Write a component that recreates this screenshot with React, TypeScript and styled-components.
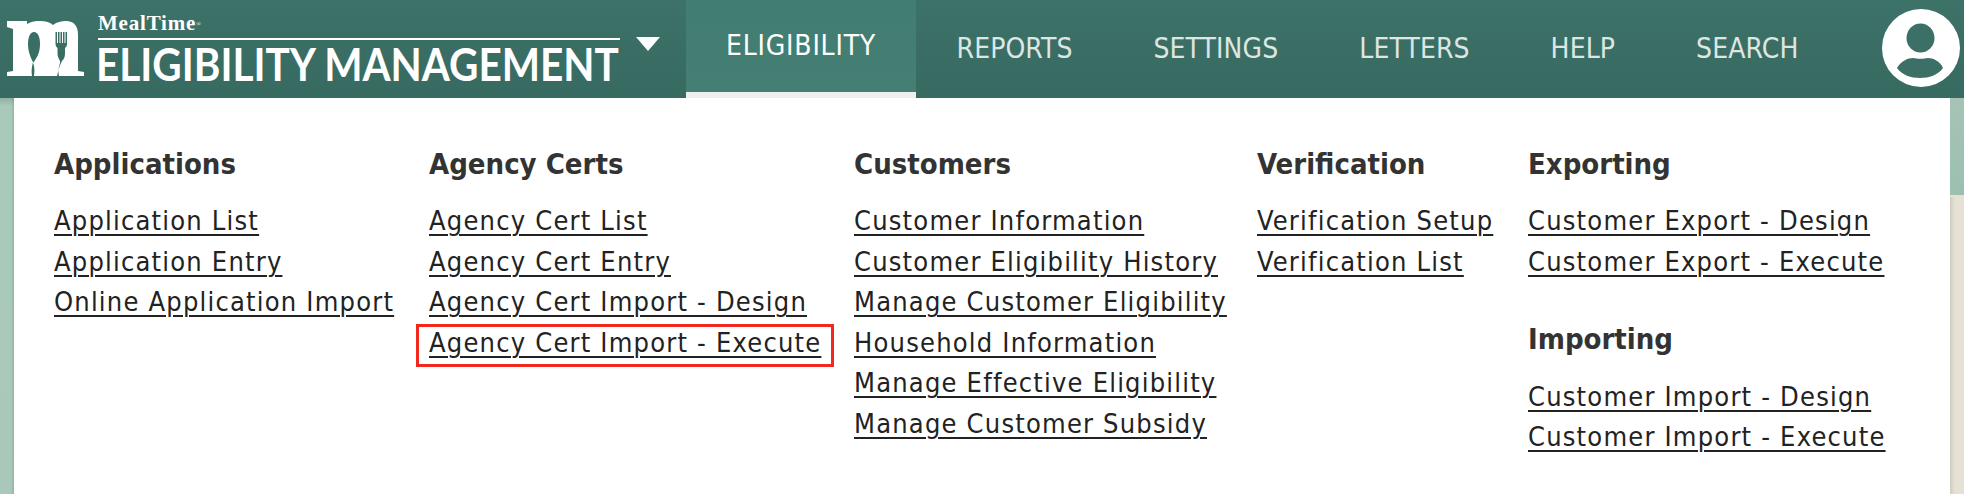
import React from 'react';
import styled, { createGlobalStyle } from 'styled-components';

const GlobalStyle = createGlobalStyle`
  html, body {
    margin: 0;
    padding: 0;
  }
  body {
    font-family: 'DejaVu Sans Condensed', 'DejaVu Sans', sans-serif;
    background: #fff;
  }
`;

const TABS = ['ELIGIBILITY', 'REPORTS', 'SETTINGS', 'LETTERS', 'HELP', 'SEARCH'];

type MenuGroup = { title: string; links: { label: string; marked?: boolean }[] };

const COLUMNS: { width: number; groups: MenuGroup[] }[] = [
  {
    width: 375,
    groups: [
      {
        title: 'Applications',
        links: [
          { label: 'Application List' },
          { label: 'Application Entry' },
          { label: 'Online Application Import' },
        ],
      },
    ],
  },
  {
    width: 425,
    groups: [
      {
        title: 'Agency Certs',
        links: [
          { label: 'Agency Cert List' },
          { label: 'Agency Cert Entry' },
          { label: 'Agency Cert Import - Design' },
          { label: 'Agency Cert Import - Execute', marked: true },
        ],
      },
    ],
  },
  {
    width: 403,
    groups: [
      {
        title: 'Customers',
        links: [
          { label: 'Customer Information' },
          { label: 'Customer Eligibility History' },
          { label: 'Manage Customer Eligibility' },
          { label: 'Household Information' },
          { label: 'Manage Effective Eligibility' },
          { label: 'Manage Customer Subsidy' },
        ],
      },
    ],
  },
  {
    width: 271,
    groups: [
      {
        title: 'Verification',
        links: [{ label: 'Verification Setup' }, { label: 'Verification List' }],
      },
    ],
  },
  {
    width: 380,
    groups: [
      {
        title: 'Exporting',
        links: [{ label: 'Customer Export - Design' }, { label: 'Customer Export - Execute' }],
      },
      {
        title: 'Importing',
        links: [{ label: 'Customer Import - Design' }, { label: 'Customer Import - Execute' }],
      },
    ],
  },
];

const MealTimeMark = () => (
  <LogoSvg viewBox="0 0 77 55">
    <path
      fillRule="evenodd"
      fill="#fff"
      d="M0 0H20V3C24 .5 29 0 33 0C39 0 43 1.500 46 4C50 1 54 0 59 0C67 0 71 5 71 14V50L77 51V55H50L52 47C53 44 54 42 55 40C57 38 58 36 58 32V27C59 26 60 25 60 23V11H58.500V22H57.500V11H56V22H55V11H53.500V22H52.500V11H51V22H50V11H48.500V23C48.500 25 49.500 26 50.500 27V32C50.500 36 52 38 53 40C54 42 50 47 52 55H27C28 48 27 44 26 42C29 38 33 33 33 23C33 16 31 11 27 11C23 11 21 16 21 23C21 31 24 37 26 41C25 45 24 50 25 55H0V51L6 50V8L0 6Z"
    />
  </LogoSvg>
);

const UserIcon = () => (
  <AvatarSvg viewBox="0 0 78 78">
    <circle cx="39" cy="39" r="39" fill="#fff" />
    <ellipse cx="38.500" cy="29" rx="14" ry="14.500" fill="#3c6f65" />
    <path
      fill="#3c6f65"
      d="M15 59C19 52 26 49 31 49C35 50 42 50 46 49C51 49 58 52 61 59C56 66 47 69 38 69C29 69 20 66 15 59Z"
    />
  </AvatarSvg>
);

const App = () => {
  return (
    <>
      <GlobalStyle />
      <Page>
        <Header>
          <Brand>
            <MealTimeMark />
            <BrandText>
              <BrandName>
                MealTime<BrandReg>®</BrandReg>
              </BrandName>
              <ProductName>ELIGIBILITY MANAGEMENT</ProductName>
            </BrandText>
            <Caret />
          </Brand>
          <Tabs>
            {TABS.map((tab, i) => (
              <Tab key={tab} $active={i === 0}>
                {tab}
              </Tab>
            ))}
          </Tabs>
          <UserIcon />
        </Header>
        <Panel>
          {COLUMNS.map((column) => (
            <Column key={column.groups[0].title} $width={column.width}>
              {column.groups.map((group) => (
                <Group key={group.title}>
                  <GroupTitle>{group.title}</GroupTitle>
                  <LinkList>
                    {group.links.map((link) => (
                      <MenuLink key={link.label} href="#" $marked={link.marked}>
                        {link.label}
                      </MenuLink>
                    ))}
                  </LinkList>
                </Group>
              ))}
            </Column>
          ))}
        </Panel>
      </Page>
    </>
  );
};

export default App;

const Page = styled.div`
  width: 1964px;
  height: 494px;
  overflow: hidden;
  background:
    linear-gradient(to right, transparent 11px, rgba(60, 80, 70, 0.18) 14px) 0 98px / 14px 396px no-repeat,
    linear-gradient(#8fb0a2, #a9cabb 8px, #a9c8b9 100%) 0 98px / 14px 396px no-repeat,
    linear-gradient(to right, rgba(60, 60, 40, 0.12), transparent 5px) 1950px 197px / 14px 297px no-repeat,
    linear-gradient(#a5c4b6, #9cc0b0 97px, #e5e2d5 97px) 1950px 98px / 14px 396px no-repeat,
    #fff;
`;

const Header = styled.header`
  display: flex;
  align-items: stretch;
  height: 98px;
  background: linear-gradient(#3d7268, #376a60);
`;

const Brand = styled.div`
  display: flex;
  align-items: flex-start;
  width: 686px;
  padding: 21px 0 0 7px;
  box-sizing: border-box;
`;

const LogoSvg = styled.svg`
  width: 77px;
  height: 55px;
  flex-shrink: 0;
`;

const BrandText = styled.div`
  display: flex;
  flex-direction: column;
  margin: -8px 0 0 14px;
  width: 522px;
`;

const BrandName = styled.div`
  height: 25px;
  border-bottom: 2px solid #fff;
  color: #fff;
  font-family: 'Liberation Serif', serif;
  font-size: 21px;
  font-weight: bold;
  letter-spacing: 0.8px;
  line-height: 20px;
`;

const BrandReg = styled.span`
  font-size: 6px;
  font-weight: normal;
  vertical-align: 4px;
`;

const ProductName = styled.div`
  margin: 1px 0 0 -2px;
  color: #fff;
  font-family: 'Lato', sans-serif;
  font-size: 45px;
  font-weight: 700;
  line-height: 46px;
  white-space: nowrap;
  transform: scaleX(0.9);
  transform-origin: left center;
`;

const Caret = styled.div`
  width: 0;
  height: 0;
  margin: 16px 0 0 16px;
  border-left: 12px solid transparent;
  border-right: 12px solid transparent;
  border-top: 14px solid #fff;
`;

const Tabs = styled.nav`
  display: flex;
  flex: 1;
`;

const Tab = styled.div<{ $active?: boolean }>`
  padding: ${(p) => (p.$active ? '29px 40px 0' : '32px 40.500px 0')};
  font-size: 28px;
  line-height: 34px;
  letter-spacing: ${(p) => (p.$active ? '0.8px' : '0.1px')};
  box-sizing: border-box;
  color: ${(p) => (p.$active ? '#fff' : '#dde6e3')};
  background: ${(p) => (p.$active ? 'linear-gradient(#427d71, #457f73)' : 'transparent')};
  border-bottom: ${(p) => (p.$active ? '6px solid #eeeeee' : '0')};
`;

const AvatarSvg = styled.svg`
  width: 78px;
  height: 78px;
  margin: 9px 4px 0 0;
  flex-shrink: 0;
`;

const Panel = styled.main`
  display: flex;
  height: 396px;
  margin: 0 14px;
  padding: 46px 0 0 40px;
  box-sizing: border-box;
  background: #fff;
`;

const Column = styled.div<{ $width: number }>`
  display: flex;
  flex-direction: column;
  gap: 37px;
  flex: 0 0 ${(p) => p.$width}px;
`;

const Group = styled.section`
  display: flex;
  flex-direction: column;
`;

const GroupTitle = styled.h3`
  margin: 0 0 17.300px;
  color: #333;
  font-size: 29px;
  font-weight: 700;
  line-height: 40px;
`;

const LinkList = styled.div`
  display: flex;
  flex-direction: column;
  align-items: flex-start;
`;

const MenuLink = styled.a<{ $marked?: boolean }>`
  position: relative;
  color: #222;
  font-size: 27px;
  line-height: 40.500px;
  letter-spacing: 1.2px;
  text-decoration: underline;
  text-underline-offset: 4px;
  text-decoration-thickness: 2px;
  white-space: nowrap;

  &::after {
    content: '';
    display: ${(p) => (p.$marked ? 'block' : 'none')};
    position: absolute;
    top: 1px;
    right: -13px;
    bottom: -4px;
    left: -13px;
    border: 3px solid #f0281e;
  }
`;
